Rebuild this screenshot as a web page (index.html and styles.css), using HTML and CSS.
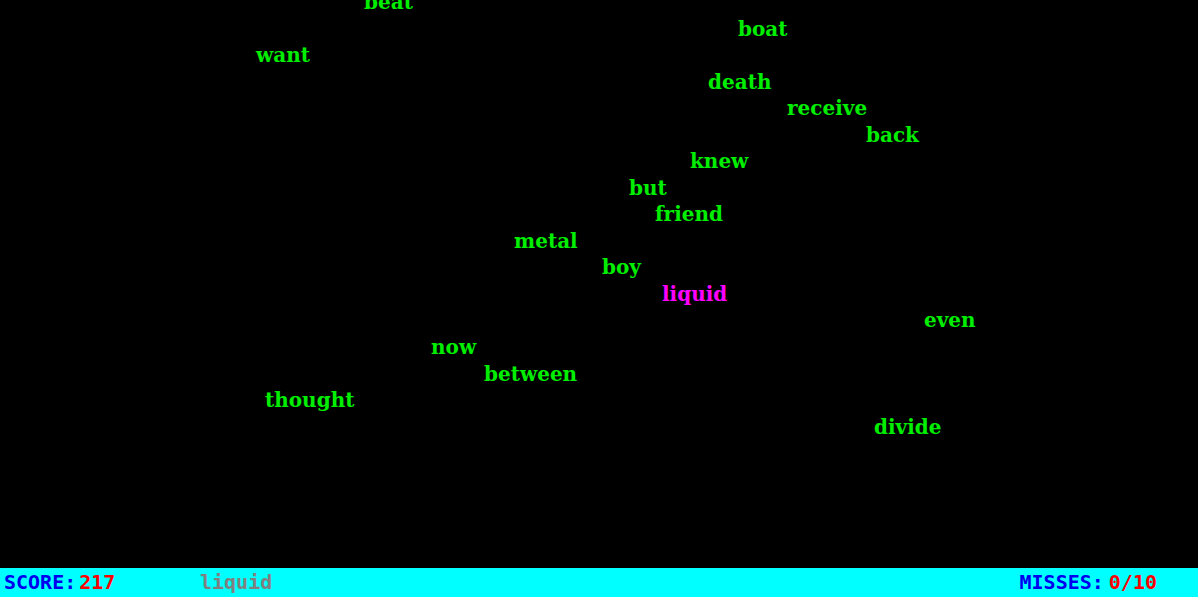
FILE: index.html
```html
<!DOCTYPE html>
<html>
<head>
<meta charset="utf-8">
<link rel="stylesheet" href="styles.css">
</head>
<body>
<div class="game">
  <div class="field">
    <div class="word" style="left:364px;top:-11px">beat</div>
    <div class="word" style="left:738px;top:16px">boat</div>
    <div class="word" style="left:256px;top:42px">want</div>
    <div class="word" style="left:708px;top:69px">death</div>
    <div class="word" style="left:787px;top:95px">receive</div>
    <div class="word" style="left:866px;top:122px">back</div>
    <div class="word" style="left:690px;top:148px">knew</div>
    <div class="word" style="left:629px;top:175px">but</div>
    <div class="word" style="left:655px;top:201px">friend</div>
    <div class="word" style="left:514px;top:228px">metal</div>
    <div class="word" style="left:602px;top:254px">boy</div>
    <div class="word active" style="left:662px;top:281px">liquid</div>
    <div class="word" style="left:924px;top:307px">even</div>
    <div class="word" style="left:431px;top:334px">now</div>
    <div class="word" style="left:484px;top:361px">between</div>
    <div class="word" style="left:265px;top:387px">thought</div>
    <div class="word" style="left:874px;top:414px">divide</div>
  </div>
  <div class="status">
    <div class="score"><span class="label">SCORE:</span><span class="value">217</span></div>
    <div class="typed">liquid</div>
    <div class="misses"><span class="label">MISSES:</span><span class="value wide">0/10</span></div>
  </div>
</div>
</body>
</html>
```

FILE: styles.css
```css
html, body {
  margin: 0;
  padding: 0;
  background: #000;
  width: 1198px;
  height: 597px;
  overflow: hidden;
}
.game {
  display: flex;
  flex-direction: column;
  height: 597px;
}
.field {
  position: relative;
  flex: 1;
  overflow: hidden;
}
.word {
  position: absolute;
  font-family: "DejaVu Serif", serif;
  font-weight: bold;
  font-size: 20px;
  line-height: 27px;
  color: #00ee00;
  white-space: nowrap;
}
.word.active {
  color: #ff00ff;
}
.status {
  height: 29px;
  background: #00ffff;
  display: flex;
  align-items: center;
  font-family: "DejaVu Sans Mono", monospace;
  font-weight: bold;
  font-size: 20px;
  line-height: 29px;
  padding: 0 4px;
}
.label { color: #0000ee; }
.value { color: #ff0000; margin-left: 3px; }
.value.wide { margin-left: 5px; }
.score { width: 196px; }
.typed { color: #808080; flex: 1; }
.misses { margin-right: 37px; }
```
